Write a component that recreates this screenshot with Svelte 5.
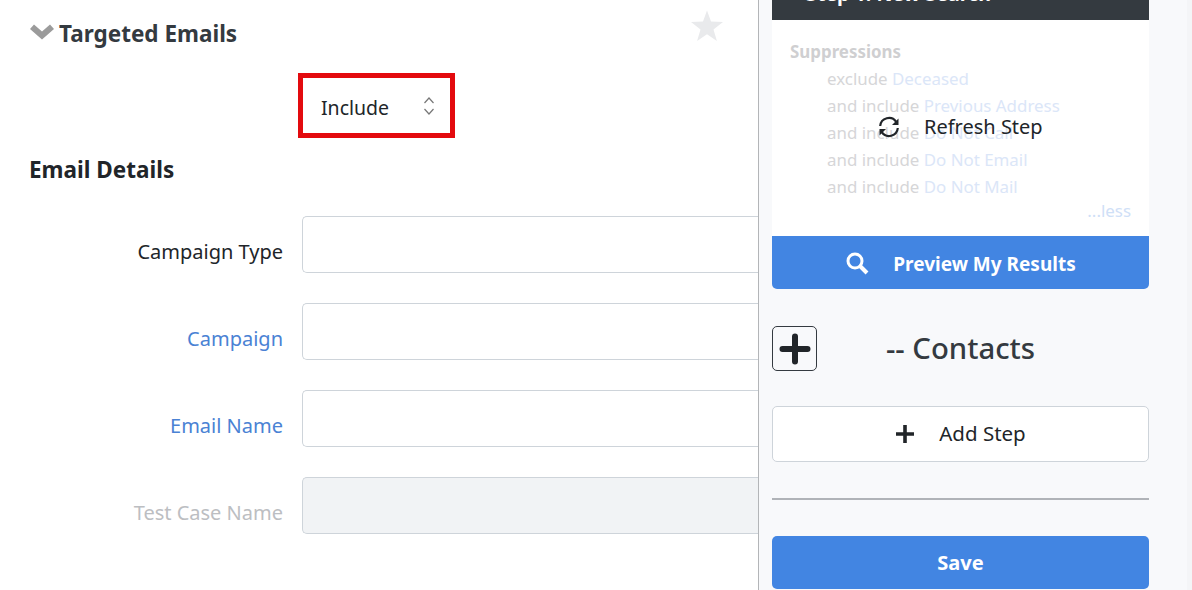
<script lang="ts">
  const fields = [
    { label: 'Campaign Type', kind: 'plain' },
    { label: 'Campaign', kind: 'link' },
    { label: 'Email Name', kind: 'link' },
    { label: 'Test Case Name', kind: 'disabled' }
  ];
  const suppressions = [
    { verb: 'exclude', name: 'Deceased' },
    { verb: 'and include', name: 'Previous Address' },
    { verb: 'and include', name: 'Do Not Call' },
    { verb: 'and include', name: 'Do Not Email' },
    { verb: 'and include', name: 'Do Not Mail' }
  ];
</script>

<div class="page">
  <main class="main">
    <div class="title-row">
      <svg class="chevron" width="24" height="16" viewBox="0 0 24 16">
        <path d="M4 0.5 L12 7.5 L20 0.5 L24 5 L12 15.5 L0 5 Z" fill="#9b9b9b" />
      </svg>
      <h2>Targeted Emails</h2>
      <svg class="star" width="34" height="32" viewBox="0 0 34 32">
        <path d="M17 0.5 L21 11.6 L33 12 L23.5 19.4 L26.9 31 L17 24.2 L7.1 31 L10.5 19.4 L1 12 L13 11.6 Z" fill="#e9eaec" />
      </svg>
    </div>

    <div class="select">
      <span>Include</span>
      <svg width="12" height="20" viewBox="0 0 12 20" fill="none" stroke="#777" stroke-width="1.2">
        <path d="M1.5 7 L6 2 L10.5 7" />
        <path d="M1.5 13 L6 18 L10.5 13" />
      </svg>
    </div>

    <h3>Email Details</h3>

    <div class="form">
      {#each fields as field}
        <div class="label {field.kind}">{field.label}</div>
        <div class="input" class:off={field.kind === 'disabled'}></div>
      {/each}
    </div>
  </main>

  <aside class="panel">
    <div class="step-head"><span class="check">✓</span> Step 1: New Search</div>
    <div class="step-body">
      <div class="sup-title">Suppressions</div>
      {#each suppressions as row}
        <div class="sup-row">{row.verb} <span class="sup-name">{row.name}</span></div>
      {/each}
      <div class="less">...less</div>
      <div class="refresh">
        <svg width="24" height="24" viewBox="0 0 24 24" fill="none">
          <path d="M3.2 11 A8.8 8.8 0 0 1 19.2 6.8" stroke="#212529" stroke-width="2.2" />
          <path d="M20.8 13 A8.8 8.8 0 0 1 4.8 17.2" stroke="#212529" stroke-width="2.2" />
          <path d="M21.5 3.5 V10 H15 Z" fill="#212529" />
          <path d="M2.5 20.5 V14 H9 Z" fill="#212529" />
        </svg>
        <span>Refresh Step</span>
      </div>
    </div>
    <button class="primary preview">
      <svg width="24" height="24" viewBox="0 0 24 24" fill="none" stroke="#fff">
        <circle cx="10" cy="10" r="7" stroke-width="3" />
        <path d="M15 15 L22 22" stroke-width="4" />
      </svg>
      <span>Preview My Results</span>
    </button>

    <div class="contacts">
      <button class="plus-box" aria-label="Expand">
        <svg width="32" height="32" viewBox="0 0 32 32">
          <path d="M16 3.5 V28.5 M3.5 16 H28.5" stroke="#212529" stroke-width="6" stroke-linecap="round" />
        </svg>
      </button>
      <span class="contacts-label">-- Contacts</span>
    </div>

    <button class="add-step">
      <svg width="20" height="20" viewBox="0 0 20 20">
        <path d="M10 1 V19 M1 10 H19" stroke="#212529" stroke-width="3.6" />
      </svg>
      <span>Add Step</span>
    </button>

    <hr />

    <button class="primary save">Save</button>
  </aside>
  <div class="scroll-strip"></div>
</div>

<style>
  :global(body) {
    margin: 0;
    background: #fff;
  }

  .page {
    display: flex;
    width: 1192px;
    height: 590px;
    overflow: hidden;
    font-family: "Noto Sans", "Open Sans", sans-serif;
    color: #212529;
  }

  .main {
    flex: 0 0 758px;
    min-width: 0;
  }

  .title-row {
    display: flex;
    align-items: center;
    height: 32px;
    margin: 10px 0 0 30px;
  }

  .chevron {
    margin-right: 5px;
    margin-top: 12px;
  }

  h2 {
    margin: 14px 0 0;
    font-size: 22.5px;
    font-weight: 700;
    color: #343a40;
  }

  .star {
    margin-left: 453px;
  }

  .select {
    display: flex;
    align-items: center;
    justify-content: space-between;
    box-sizing: border-box;
    width: 157px;
    height: 65px;
    margin: 31px 0 0 298px;
    padding: 0 15px 0 18px;
    border: 5px solid #e30a0e;
    font-size: 19.5px;
    background: #fff;
  }

  .select span {
    margin-top: 3px;
  }

  h3 {
    margin: 17px 0 0 29px;
    font-size: 22.5px;
    font-weight: 700;
    line-height: 30px;
    color: #212529;
  }

  .form {
    display: grid;
    grid-template-columns: 283px 1fr;
    grid-auto-rows: 57px;
    row-gap: 30px;
    margin: 31px -1px 0 0;
  }

  .label {
    align-self: end;
    padding-bottom: 6px;
    text-align: right;
    font-size: 20px;
    line-height: 30px;
  }

  .label.link {
    color: #4a82d4;
  }

  .label.disabled {
    color: #bcbec2;
  }

  .input {
    box-sizing: border-box;
    margin-left: 19px;
    border: 1px solid #ced4da;
    border-right: 0;
    border-radius: 5px 0 0 5px;
    background: #fff;
  }

  .input.off {
    background: #f1f3f5;
  }

  .panel {
    position: relative;
    flex: 0 0 377px;
    padding: 0 38px 0 13px;
    border-left: 1px solid #b3b5b8;
    background: #f8f9fb;
  }

  .step-head {
    box-sizing: border-box;
    height: 34px;
    margin-top: -14px;
    padding: 0 17px;
    background: #343a40;
    color: #fff;
    font-size: 19.6px;
    font-weight: 700;
    line-height: 16px;
  }

  .check {
    margin-right: -5px;
  }

  .step-body {
    position: relative;
    box-sizing: border-box;
    height: 216px;
    padding: 18px 18px 0;
    background: #fff;
    font-size: 16.9px;
    line-height: 27px;
    color: #d6d6d8;
  }

  .sup-title {
    font-weight: 700;
    color: #cfcfd1;
  }

  .sup-row {
    padding-left: 37px;
    font-weight: 400;
  }

  .sup-name {
    color: #dbe6f8;
  }

  .less {
    margin-top: -3px;
    text-align: right;
    color: #cfe0f7;
  }

  .refresh {
    position: absolute;
    top: 92px;
    left: 105px;
    display: flex;
    align-items: center;
    gap: 23px;
    font-size: 20px;
    line-height: 30px;
    color: #212529;
  }

  button {
    font-family: inherit;
    cursor: pointer;
  }

  .primary {
    display: flex;
    align-items: center;
    justify-content: center;
    box-sizing: border-box;
    width: 100%;
    height: 53px;
    border: 0;
    background: #4285e2;
    color: #fff;
    font-size: 20px;
    font-weight: 700;
  }

  .preview {
    gap: 24px;
    border-radius: 0 0 5px 5px;
    font-size: 19px;
  }

  .preview span {
    margin-top: 2px;
  }

  .contacts {
    position: relative;
    display: flex;
    align-items: center;
    justify-content: center;
    height: 45px;
    margin-top: 37px;
  }

  .plus-box {
    position: absolute;
    left: 0;
    top: 0;
    display: flex;
    align-items: center;
    justify-content: center;
    box-sizing: border-box;
    width: 45px;
    height: 45px;
    padding: 0;
    border: 1px solid #343a40;
    border-radius: 5px;
    background: transparent;
  }

  .contacts-label {
    margin-top: -2px;
    font-size: 29.3px;
    font-weight: 500;
    color: #343a40;
  }

  .add-step {
    display: flex;
    align-items: center;
    justify-content: center;
    gap: 24px;
    box-sizing: border-box;
    width: 100%;
    height: 56px;
    margin-top: 35px;
    border: 1px solid #ced4da;
    border-radius: 5px;
    background: #fff;
    color: #212529;
    font-size: 20.5px;
  }

  .add-step span {
    margin-top: -2px;
  }

  hr {
    height: 2px;
    margin: 36px 0 0;
    border: 0;
    background: #b0b3b8;
  }

  .save {
    margin-top: 36px;
    border-radius: 5px;
  }

  .scroll-strip {
    flex: 1;
    background: #f4f5f7;
  }
</style>
